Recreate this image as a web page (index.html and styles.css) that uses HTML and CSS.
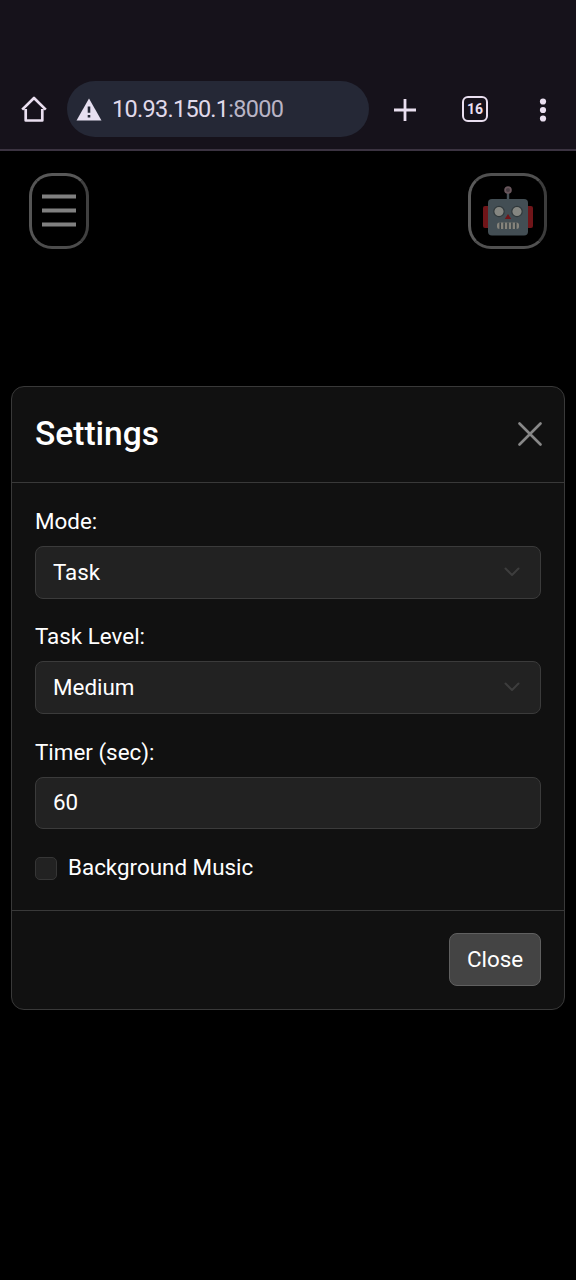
FILE: index.html
```html
<!DOCTYPE html>
<html lang="en">
<head>
<meta charset="utf-8">
<title>Settings</title>
<link rel="stylesheet" href="styles.css">
</head>
<body>
<header class="browser-bar">
  <svg class="home" width="26" height="28" viewBox="0 0 26 28"><path d="M4.7 14V25.5H21.3V14M1.2 14.6L13 3L24.8 14.6" fill="none" stroke="#eadff0" stroke-width="2.7" stroke-linejoin="round"/></svg>
  <div class="address">
    <svg width="26" height="23" viewBox="0 0 26 23"><path d="M13 .5L25.5 22.5H.5Z" fill="#e6dff0"/><path d="M13 8.5V14.8M13 17V19.6" stroke="#252836" stroke-width="2.6"/></svg>
    <span class="url">10.93.150.1<span class="port">:8000</span></span>
  </div>
  <svg class="plus" width="24" height="24" viewBox="0 0 24 24"><path d="M12 1V23M1 12H23" stroke="#eadff0" stroke-width="2.8"/></svg>
  <div class="tabs">16</div>
  <svg class="more" width="8" height="24" viewBox="0 0 8 24" fill="#eadff0"><circle cx="4" cy="3.5" r="3.1"/><circle cx="4" cy="12" r="3.1"/><circle cx="4" cy="20.5" r="3.1"/></svg>
</header>
<nav class="toolbar">
  <button class="tool menu" aria-label="Menu"><svg width="34" height="34" viewBox="0 0 34 34"><path d="M0 2.5H34M0 16.5H34M0 30.5H34" stroke="#808080" stroke-width="4"/></svg></button>
  <button class="tool robot" aria-label="Robot">
    <svg width="50" height="50" viewBox="0 0 50 50">
      <rect x="0" y="20" width="7" height="22" rx="2" fill="#701519"/><rect x="43" y="20" width="7" height="22" rx="2" fill="#701519"/>
      <path d="M25 6V14" stroke="#465056" stroke-width="2.4"/><circle cx="25" cy="4" r="2.9" fill="#493e43" stroke="#69565c" stroke-width="1.8"/>
      <rect x="5" y="13" width="40" height="36.5" rx="4" fill="#434e54"/>
      <circle cx="16" cy="25.5" r="5.2" fill="#858681" stroke="#30383b" stroke-width="1.2"/><circle cx="34" cy="25.5" r="5.2" fill="#858681" stroke="#30383b" stroke-width="1.2"/>
      <path d="M25 28L28.2 33H21.8Z" fill="#701519"/>
      <rect x="14" y="36.5" width="22" height="6.5" rx="2.5" fill="#85837b"/><path d="M17.2 36.5V43M21.1 36.5V43M25 36.5V43M28.9 36.5V43M32.8 36.5V43" stroke="#384247" stroke-width="1.5"/>
    </svg>
  </button>
</nav>
<main class="modal">
  <div class="modal-header">
    <h1>Settings</h1>
    <svg width="24" height="24" viewBox="0 0 24 24"><path d="M1.5 1.5L22.5 22.5M22.5 1.5L1.5 22.5" stroke="#888" stroke-width="2.6" stroke-linecap="round"/></svg>
  </div>
  <div class="modal-body">
    <div class="field"><div class="label">Mode:</div><div class="control">Task<svg width="16" height="10" viewBox="0 0 16 10"><path d="M1.5 1.5L8 8L14.5 1.5" fill="none" stroke="#3d3d3d" stroke-width="2" stroke-linecap="round" stroke-linejoin="round"/></svg></div></div>
    <div class="field"><div class="label">Task Level:</div><div class="control">Medium<svg width="16" height="10" viewBox="0 0 16 10"><path d="M1.5 1.5L8 8L14.5 1.5" fill="none" stroke="#3d3d3d" stroke-width="2" stroke-linecap="round" stroke-linejoin="round"/></svg></div></div>
    <div class="field"><div class="label">Timer (sec):</div><div class="control number">60</div></div>
    <div class="check"><span class="box"></span>Background Music</div>
  </div>
  <div class="modal-footer"><button class="close">Close</button></div>
</main>
</body>
</html>
```
FILE: styles.css
```css
* { box-sizing: border-box; }
body { margin: 0; height: 1280px; overflow: hidden; background: #000; color: #fff; font-family: Roboto, sans-serif; font-size: 22.4px; line-height: 34px; }
svg { display: block; flex: none; }
button { font: inherit; color: inherit; }

.browser-bar { height: 151px; padding: 81px 29px 0 21px; display: flex; align-items: flex-start; background: #16121b; border-bottom: 2px solid #3b3341; }
.home { margin-top: 14px; }
.address { width: 302px; height: 56px; margin-left: 20px; padding-left: 9px; border-radius: 28px; background: #252836; display: flex; align-items: center; gap: 10px; }
.url { color: #e0d9ea; font-size: 23.5px; letter-spacing: -0.72px; }
.port { color: #b9b4c5; }
.plus { margin: 17px 0 0 24px; }
.tabs { width: 26px; height: 26px; margin: 15px 0 0 45px; border: 2px solid #eadff0; border-radius: 6px; color: #eadff0; font-size: 14px; font-weight: 700; line-height: 22px; text-align: center; }
.more { margin: 17px 0 0 51px; }

.toolbar { height: 235px; padding: 22px 29px 0; display: flex; justify-content: space-between; align-items: flex-start; }
.tool { height: 76px; padding: 0; display: flex; justify-content: center; align-items: center; background: none; border: 3px solid #505050; border-radius: 23px; }
.menu { width: 60px; border-color: #585858 #404040 #4c4c4c #555; }
.robot { width: 79px; border-color: #505050 #3c3c3c #505050 #5a5a5a; }

.modal { width: 554px; height: 624px; margin-left: 11px; background: #111; border: 1px solid #393939; border-radius: 13px; }
.modal-header { height: 96px; padding: 0 22px 2px 23px; display: flex; align-items: center; justify-content: space-between; border-bottom: 1px solid #393939; }
h1 { margin: 0; font-size: 33.5px; font-weight: 500; line-height: 50px; }
.modal-body { height: 427px; padding: 21px 23px 0; }
.field { height: 115.4px; }
.control { height: 53px; margin-top: 8px; padding: 0 20px 2px 17px; display: flex; align-items: center; justify-content: space-between; background: #222; border: 1px solid #3b3b3b; border-radius: 8px; }
.number { height: 52px; }
.check { display: flex; align-items: center; gap: 11px; }
.box { width: 22px; height: 23px; margin-top: 2px; background: #222; border: 1px solid #363636; border-radius: 5px; }
.modal-footer { padding: 22px 23px 0; display: flex; justify-content: flex-end; border-top: 1px solid #393939; }
.close { width: 92px; height: 53px; padding: 0 0 1px; background: #444; border: 1px solid #606060; border-radius: 8px; }
```
